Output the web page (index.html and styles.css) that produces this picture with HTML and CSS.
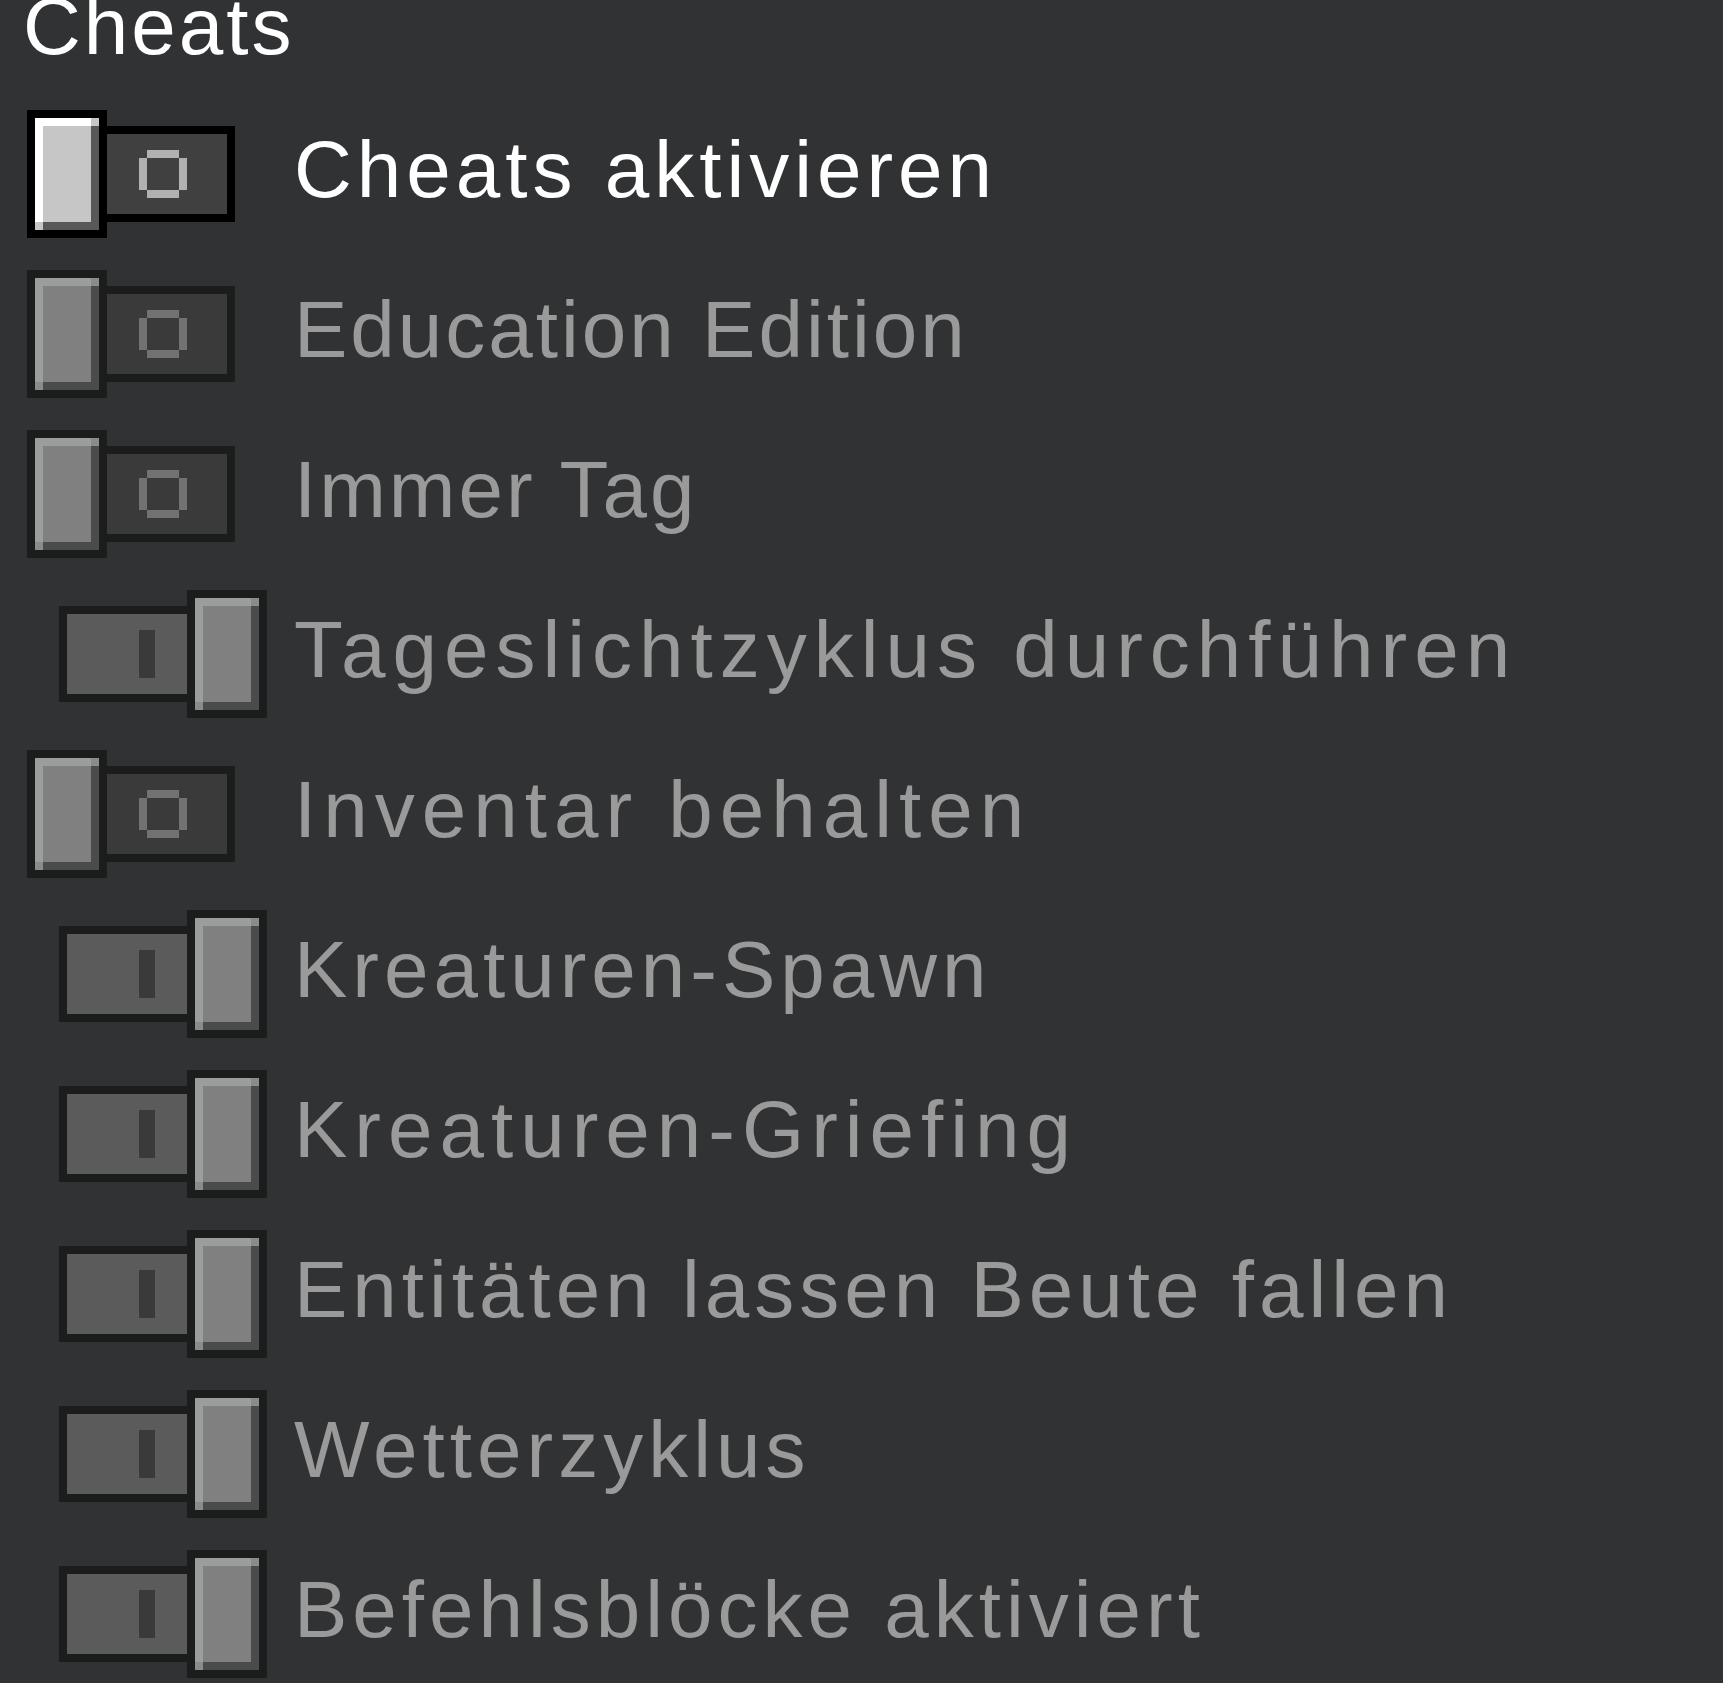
FILE: index.html
```html
<!DOCTYPE html>
<html lang="de">
<head>
<meta charset="utf-8">
<title>Cheats</title>
<link rel="stylesheet" href="styles.css">
</head>
<body>
<section class="panel">
  <h2 class="title">Cheats</h2>
  <ul class="list">
    <li class="row">
      <span class="toggle off enabled"><span class="thumb"></span><span class="track"><span class="ring"></span></span></span>
      <span class="label bright">Cheats aktivieren</span>
    </li>
    <li class="row">
      <span class="toggle off"><span class="thumb"></span><span class="track"><span class="ring"></span></span></span>
      <span class="label tight">Education Edition</span>
    </li>
    <li class="row">
      <span class="toggle off"><span class="thumb"></span><span class="track"><span class="ring"></span></span></span>
      <span class="label tight">Immer Tag</span>
    </li>
    <li class="row">
      <span class="toggle on"><span class="track"><span class="bar"></span></span><span class="thumb"></span></span>
      <span class="label wide">Tageslichtzyklus durchführen</span>
    </li>
    <li class="row">
      <span class="toggle off"><span class="thumb"></span><span class="track"><span class="ring"></span></span></span>
      <span class="label wide">Inventar behalten</span>
    </li>
    <li class="row">
      <span class="toggle on"><span class="track"><span class="bar"></span></span><span class="thumb"></span></span>
      <span class="label">Kreaturen-Spawn</span>
    </li>
    <li class="row">
      <span class="toggle on"><span class="track"><span class="bar"></span></span><span class="thumb"></span></span>
      <span class="label wide">Kreaturen-Griefing</span>
    </li>
    <li class="row">
      <span class="toggle on"><span class="track"><span class="bar"></span></span><span class="thumb"></span></span>
      <span class="label">Entitäten lassen Beute fallen</span>
    </li>
    <li class="row">
      <span class="toggle on"><span class="track"><span class="bar"></span></span><span class="thumb"></span></span>
      <span class="label">Wetterzyklus</span>
    </li>
    <li class="row">
      <span class="toggle on"><span class="track"><span class="bar"></span></span><span class="thumb"></span></span>
      <span class="label">Befehlsblöcke aktiviert</span>
    </li>
  </ul>
</section>
</body>
</html>
```
FILE: styles.css
```css
html, body {
  margin: 0;
  padding: 0;
  background: #313234;
}

body {
  font-family: "Liberation Sans", Arial, sans-serif;
  overflow: hidden;
}

.panel {
  padding-left: 27px;
}

.title {
  margin: -13px 0 0 -4px;
  font-size: 80px;
  line-height: 80px;
  font-weight: normal;
  letter-spacing: 3px;
  color: #ffffff;
}

.list {
  list-style: none;
  margin: 43px 0 0 0;
  padding: 0;
  display: flex;
  flex-direction: column;
  gap: 32px;
}

.row {
  display: flex;
  align-items: center;
  gap: 27px;
  height: 128px;
}

.label {
  font-size: 80px;
  line-height: 80px;
  padding-bottom: 8px;
  letter-spacing: 5px;
  color: #9a9a9a;
  white-space: nowrap;
}

.label.tight {
  letter-spacing: 3px;
}

.label.wide {
  letter-spacing: 7px;
}

.label.bright {
  color: #ffffff;
}

/* toggle */
.toggle {
  --border: #1b1c1c;
  --hl: #9b9d9d;
  --mid: #808080;
  --sh: #4b4b4d;
  --corner: #8b8b8b;
  --track: #3a3a3a;
  --mark: #717373;
  display: flex;
  align-items: center;
  width: 240px;
  height: 128px;
  flex: none;
}

.toggle.enabled {
  --border: #000000;
  --hl: #ffffff;
  --mid: #c6c6c6;
  --sh: #58585a;
  --corner: #c6c6c6;
  --track: #404040;
  --mark: #b1b1b1;
}

.toggle.on {
  --track: #5a5b5a;
  --mark: #3a3a3a;
  justify-content: flex-end;
}

.thumb {
  box-sizing: border-box;
  width: 80px;
  height: 128px;
  border: 8px solid var(--border);
  flex: none;
  background:
    linear-gradient(var(--corner), var(--corner)) right top / 8px 8px no-repeat,
    linear-gradient(var(--corner), var(--corner)) left bottom / 8px 8px no-repeat,
    linear-gradient(var(--hl), var(--hl)) left top / 100% 8px no-repeat,
    linear-gradient(var(--hl), var(--hl)) left top / 8px 100% no-repeat,
    linear-gradient(var(--sh), var(--sh)) right bottom / 100% 8px no-repeat,
    linear-gradient(var(--sh), var(--sh)) right bottom / 8px 100% no-repeat,
    var(--mid);
}

.track {
  box-sizing: border-box;
  display: flex;
  align-items: center;
  width: 128px;
  height: 96px;
  flex: none;
  background: var(--track);
  border: 8px solid var(--border);
}

.toggle.off .track {
  border-left: 0;
  padding-left: 32px;
}

.toggle.on .track {
  border-right: 0;
  justify-content: flex-end;
  padding-right: 32px;
}

.ring {
  width: 48px;
  height: 48px;
  background:
    linear-gradient(var(--mark), var(--mark)) 8px 0 / 32px 8px no-repeat,
    linear-gradient(var(--mark), var(--mark)) 8px 40px / 32px 8px no-repeat,
    linear-gradient(var(--mark), var(--mark)) 0 8px / 8px 32px no-repeat,
    linear-gradient(var(--mark), var(--mark)) 40px 8px / 8px 32px no-repeat;
}

.bar {
  width: 16px;
  height: 48px;
  background: var(--mark);
}
```
